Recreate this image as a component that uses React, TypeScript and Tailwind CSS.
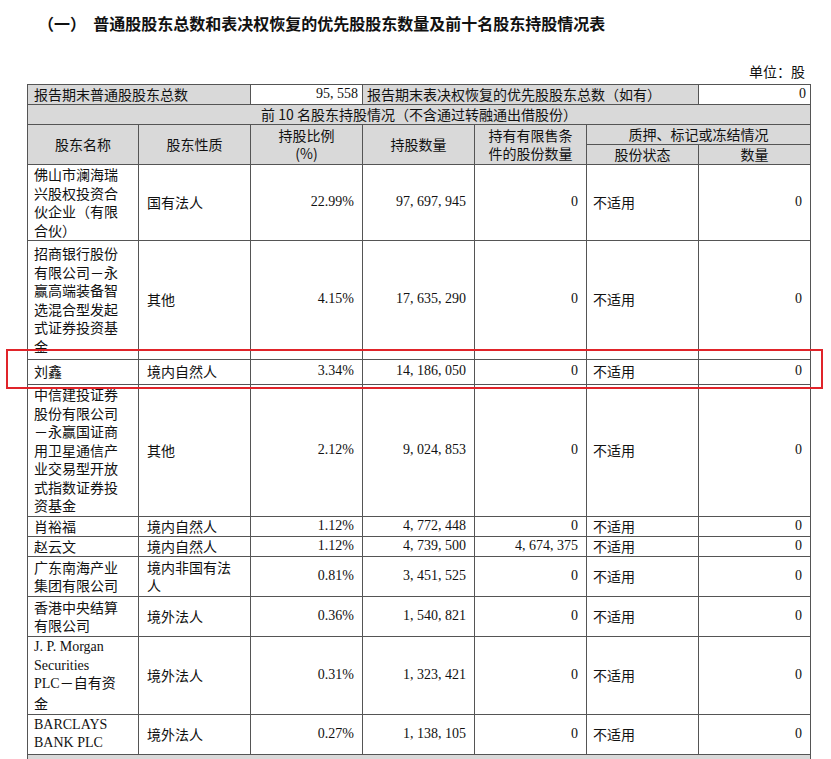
const cjk = { fontFamily: '"Noto Sans CJK SC", sans-serif' };
const num = { fontFamily: '"Liberation Serif", "Noto Sans CJK SC", serif' };

type Row = { name: string[]; kind: string[]; pct: string; qty: string; lim: string; h: number };

const rows: Row[] = [
  { name: ["佛山市澜海瑞", "兴股权投资合", "伙企业（有限", "合伙）"], kind: ["国有法人"], pct: "22.99%", qty: "97, 697, 945", lim: "0", h: 76 },
  { name: ["招商银行股份", "有限公司－永", "赢高端装备智", "选混合型发起", "式证券投资基", "金"], kind: ["其他"], pct: "4.15%", qty: "17, 635, 290", lim: "0", h: 119 },
  { name: ["刘鑫"], kind: ["境内自然人"], pct: "3.34%", qty: "14, 186, 050", lim: "0", h: 25 },
  { name: ["中信建投证券", "股份有限公司", "－永赢国证商", "用卫星通信产", "业交易型开放", "式指数证券投", "资基金"], kind: ["其他"], pct: "2.12%", qty: "9, 024, 853", lim: "0", h: 132 },
  { name: ["肖裕福"], kind: ["境内自然人"], pct: "1.12%", qty: "4, 772, 448", lim: "0", h: 20 },
  { name: ["赵云文"], kind: ["境内自然人"], pct: "1.12%", qty: "4, 739, 500", lim: "4, 674, 375", h: 20 },
  { name: ["广东南海产业", "集团有限公司"], kind: ["境内非国有法", "人"], pct: "0.81%", qty: "3, 451, 525", lim: "0", h: 40 },
  { name: ["香港中央结算", "有限公司"], kind: ["境外法人"], pct: "0.36%", qty: "1, 540, 821", lim: "0", h: 40 },
  { name: ["J. P. Morgan", "Securities", "PLC－自有资", "金"], kind: ["境外法人"], pct: "0.31%", qty: "1, 323, 421", lim: "0", h: 78 },
  { name: ["BARCLAYS", "BANK PLC"], kind: ["境外法人"], pct: "0.27%", qty: "1, 138, 105", lim: "0", h: 40 },
];

const bd = "border border-[#555]";
const gray = "bg-[#d9d9d9]";

export default function App() {
  return (
    <div className="relative w-[831px] h-[759px] overflow-hidden bg-white text-[#111]" style={cjk}>
      <div className="pt-[11px] pl-[38px] text-[16px] font-bold leading-[24px]">（一）&nbsp;&nbsp;普通股股东总数和表决权恢复的优先股股东数量及前十名股东持股情况表</div>
      <div className="mt-[26px] pr-[26px] text-right text-[14px] leading-[20px]">单位：股</div>
      <table className="ml-[27px] mt-[3px] border-collapse text-[14px] leading-[18.5px]" style={{ tableLayout: "fixed", width: 783 }}>
        <colgroup>
          {[111, 112, 112, 112, 112, 112, 112].map((w, i) => <col key={i} style={{ width: w }} />)}
        </colgroup>
        <tbody>
          <tr className="h-[20px]">
            <td colSpan={2} className={`${bd} ${gray} px-[6px]`}>报告期末普通股股东总数</td>
            <td className={`${bd} px-[4px] text-right`} style={num}>95, 558</td>
            <td colSpan={3} className={`${bd} ${gray} px-[4px]`}>报告期末表决权恢复的优先股股东总数（如有）</td>
            <td className={`${bd} px-[4px] text-right`} style={num}>0</td>
          </tr>
          <tr className="h-[19px]">
            <td colSpan={7} className={`${bd} ${gray} text-center`}>前 10 名股东持股情况（不含通过转融通出借股份）</td>
          </tr>
          <tr className="h-[20px]">
            <td rowSpan={2} className={`${bd} ${gray} text-center`}>股东名称</td>
            <td rowSpan={2} className={`${bd} ${gray} text-center`}>股东性质</td>
            <td rowSpan={2} className={`${bd} ${gray} text-center`}>持股比例<br />(%)</td>
            <td rowSpan={2} className={`${bd} ${gray} text-center`}>持股数量</td>
            <td rowSpan={2} className={`${bd} ${gray} text-center`}>持有有限售条<br />件的股份数量</td>
            <td colSpan={2} className={`${bd} ${gray} text-center`}>质押、标记或冻结情况</td>
          </tr>
          <tr className="h-[20px]">
            <td className={`${bd} ${gray} text-center`}>股份状态</td>
            <td className={`${bd} ${gray} text-center`}>数量</td>
          </tr>
          {rows.map((r, i) => (
            <tr key={i} style={{ height: r.h }}>
              <td className={`${bd} px-[6px] align-middle`}>
                {r.name.map((n, j) => <div key={j} className="whitespace-nowrap" style={/[A-Z]/.test(n) ? num : undefined}>{n}</div>)}
              </td>
              <td className={`${bd} px-[8px]`}>{r.kind.map((k, j) => <div key={j}>{k}</div>)}</td>
              <td className={`${bd} px-[8px] text-right`} style={num}>{r.pct}</td>
              <td className={`${bd} px-[8px] text-right`} style={num}>{r.qty}</td>
              <td className={`${bd} px-[8px] text-right`} style={num}>{r.lim}</td>
              <td className={`${bd} px-[6px]`}>不适用</td>
              <td className={`${bd} px-[8px] text-right`} style={num}>0</td>
            </tr>
          ))}
          <tr className="h-[24px]">
            <td colSpan={7} className={`${bd} ${gray} text-center`}>注：上述股东关联关系或一致行动的说明（不含通过转融通出借股份）</td>
          </tr>
        </tbody>
      </table>
      <div className="absolute left-[6px] top-[349px] w-[817px] h-[40px] border-2 border-[#e0242a]" />
    </div>
  );
}
